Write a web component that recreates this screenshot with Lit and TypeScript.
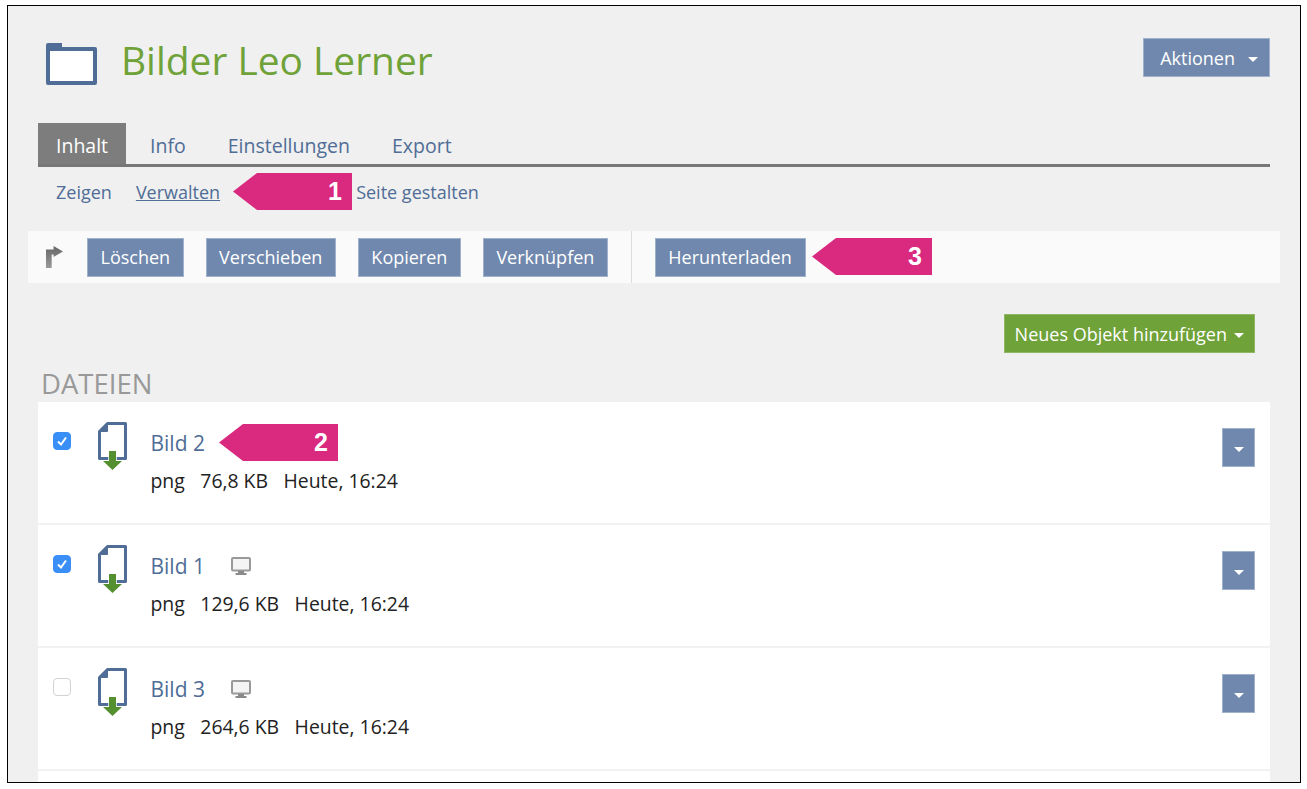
import { LitElement, css, html } from "lit";
import { customElement } from "lit/decorators.js";

const caret = html`<span class="caret"></span>`;

const files = [
  { name: "Bild 2", size: "76,8 KB", checked: true, screen: false },
  { name: "Bild 1", size: "129,6 KB", checked: true, screen: true },
  { name: "Bild 3", size: "264,6 KB", checked: false, screen: true },
];

const fileIcon = html`<svg class="file-icon" width="32" height="50" viewBox="0 0 32 50">
  <path d="M10.5 2.5H28.5V37.5H2.5V10.5Z" fill="#fff" stroke="#4f6d96" stroke-width="3" stroke-linejoin="round" />
  <path d="M2 10.5L10.500 2V10.500Z" fill="#4f6d96" stroke="#4f6d96" />
  <path d="M12 30H19V40H25L15.5 49L6 40H12Z" fill="#54902f" stroke="#fff" stroke-width="1.500" paint-order="stroke" />
</svg>`;

const screenIcon = html`<svg class="screen" width="20" height="19" viewBox="0 0 20 19">
  <rect x="1" y="1" width="18" height="12.500" rx="1" fill="#f4f4f4" stroke="#999" stroke-width="2" />
  <path d="M7 14H13V16H15.500V18H4.500V16H7Z" fill="#8a8a8a" />
</svg>`;

@customElement("app-root")
export class AppRoot extends LitElement {
  static styles = css`
    :host {
      display: block;
      width: 1307px;
      height: 789px;
      background: #fff;
      font-family: "Open Sans", sans-serif;
      font-size: 18px;
      color: #222;
    }
    .frame {
      position: relative;
      top: 5px;
      box-sizing: border-box;
      width: 1294px;
      height: 778px;
      margin-left: 7px;
      border: 1px solid #000;
      background: #f0f0f0;
      overflow: hidden;
    }
    .head {
      display: flex;
      align-items: flex-start;
      justify-content: space-between;
      box-sizing: border-box;
      height: 117px;
      padding: 32px 30px 0 38px;
    }
    .title-wrap {
      display: flex;
      align-items: center;
      gap: 24px;
      margin-top: 1px;
    }
    h1 {
      margin: 0 0 8px;
      font-size: 38.900px;
      font-weight: 400;
      line-height: 42px;
      color: #6fa239;
    }
    .btn {
      display: flex;
      align-items: center;
      box-sizing: border-box;
      height: 39px;
      padding: 0 12.500px;
      background: #7088ad;
      border: 1px solid #9fb1cb;
      color: #fff;
      white-space: nowrap;
    }
    .actions {
      gap: 13px;
      padding: 0 11px 0 16px;
    }
    .caret {
      display: inline-block;
      width: 0;
      height: 0;
      margin-top: 4px;
      border-left: 5.500px solid transparent;
      border-right: 5.500px solid transparent;
      border-top: 5.500px solid #fff;
    }
    .tabs {
      display: flex;
      height: 41px;
      margin: 0 30px;
      border-bottom: 3px solid #777;
      font-size: 19.500px;
    }
    .tabs span {
      display: flex;
      align-items: center;
      padding: 4px 18px 0;
      margin-right: 6px;
      color: #4f6d96;
    }
    .tabs span.on {
      background: #7d7d7d;
      color: #fff;
    }
    .subtabs {
      display: flex;
      align-items: center;
      height: 50px;
      padding-left: 48px;
      color: #4f6d96;
    }
    .subtabs span {
      margin-right: 24px;
    }
    .subtabs .current {
      text-decoration: underline;
      margin-right: 136px;
    }
    .toolbar {
      display: flex;
      align-items: center;
      height: 52px;
      margin: 14px 20px 0;
      background: #fafafa;
    }
    .turn {
      margin: 0 24px 0 18px;
    }
    .toolbar .btn + .btn {
      margin-left: 22px;
    }
    .toolbar .download {
      padding-right: 13.500px;
    }
    .sep {
      width: 1px;
      height: 52px;
      margin: 0 23px;
      background: #dcdcdc;
    }
    .add-row {
      display: flex;
      justify-content: flex-end;
      margin: 31px 45px 0 0;
    }
    .add {
      gap: 7px;
      padding: 0 10px;
      background: #6fa239;
      border-color: #8fb765;
    }
    h2 {
      margin: 13px 0 0 33px;
      font-size: 27.500px;
      line-height: 36px;
      font-weight: 400;
      color: #999;
    }
    .list {
      margin: 0 30px;
      background: #fff;
    }
    .row {
      display: flex;
      align-items: flex-start;
      box-sizing: border-box;
      height: 123px;
      border-bottom: 2px solid #f2f2f2;
      padding: 20px 15px 0;
    }
    .check {
      display: flex;
      align-items: center;
      justify-content: center;
      box-sizing: border-box;
      flex: none;
      width: 18px;
      height: 18px;
      margin-top: 10px;
      border-radius: 4px;
      background: #fff;
      border: 1.500px solid #d2d2d2;
    }
    .check.on {
      background: #3a8ff7;
      border-color: #3a8ff7;
    }
    .file-icon {
      flex: none;
      margin: -1px 0 0 26px;
    }
    .info {
      flex: 1;
      margin-left: 21.500px;
    }
    .name {
      display: flex;
      align-items: center;
      gap: 26px;
      height: 42px;
      font-size: 21px;
      color: #4f6d96;
    }
    .meta {
      display: flex;
      gap: 15.500px;
      margin-top: 3px;
      font-size: 19.400px;
    }
    .more {
      justify-content: center;
      width: 33px;
      padding: 0;
      margin-top: 6px;
    }
    .arrow {
      position: absolute;
      display: flex;
      align-items: center;
      justify-content: flex-end;
      box-sizing: border-box;
      width: 119px;
      height: 37px;
      padding-right: 10px;
      background: #d92a7f;
      clip-path: polygon(0 50%, 24px 0, 100% 0, 100% 100%, 24px 100%);
      font-family: "Liberation Sans", Arial, sans-serif;
      font-size: 25px;
      font-weight: 700;
      color: #fff;
    }
    .arrow.wide {
      width: 120px;
    }
  `;

  render() {
    return html`
      <div class="frame">
        <div class="head">
          <div class="title-wrap">
            <svg width="51" height="42" viewBox="0 0 51 42">
              <path d="M0 2a2 2 0 0 1 2-2H16V4H49a2 2 0 0 1 2 2V40a2 2 0 0 1-2 2H2a2 2 0 0 1-2-2Z" fill="#4f6d96" />
              <rect x="4" y="8" width="43" height="30" fill="#fff" />
            </svg>
            <h1>Bilder Leo Lerner</h1>
          </div>
          <div class="btn actions">Aktionen ${caret}</div>
        </div>

        <div class="tabs">
          <span class="on">Inhalt</span>
          <span>Info</span>
          <span>Einstellungen</span>
          <span>Export</span>
        </div>
        <div class="subtabs">
          <span>Zeigen</span>
          <span class="current">Verwalten</span>
          <span>Seite gestalten</span>
        </div>

        <div class="toolbar">
          <svg class="turn" width="17" height="22" viewBox="0 0 18 22" preserveAspectRatio="none">
            <defs>
              <linearGradient id="turn-fill" x1="0" y1="0" x2="0" y2="1">
                <stop offset="0" stop-color="#666" />
                <stop offset="1" stop-color="#999" />
              </linearGradient>
            </defs>
            <path d="M0 22V3.500H8V0L18 5.500L8 11V8.500H6V22Z" fill="url(#turn-fill)" />
          </svg>
          <div class="btn">Löschen</div>
          <div class="btn">Verschieben</div>
          <div class="btn">Kopieren</div>
          <div class="btn">Verknüpfen</div>
          <div class="sep"></div>
          <div class="btn download">Herunterladen</div>
        </div>

        <div class="add-row">
          <div class="btn add">Neues Objekt hinzufügen ${caret}</div>
        </div>
        <h2>DATEIEN</h2>

        <div class="list">
          ${files.map(
            (f) => html`
              <div class="row">
                <div class="check ${f.checked ? "on" : ""}">
                  ${f.checked
                    ? html`<svg width="12" height="12" viewBox="0 0 12 12">
                        <path d="M2 6.500L5 9.500L10 2.500" fill="none" stroke="#fff" stroke-width="2" />
                      </svg>`
                    : ""}
                </div>
                ${fileIcon}
                <div class="info">
                  <div class="name">${f.name} ${f.screen ? screenIcon : ""}</div>
                  <div class="meta">
                    <span>png</span><span>${f.size}</span><span>Heute, 16:24</span>
                  </div>
                </div>
                <div class="btn more">${caret}</div>
              </div>
            `
          )}
          <div class="row"></div>
        </div>

        <div class="arrow" style="left:225px;top:167px">1</div>
        <div class="arrow" style="left:211px;top:418px">2</div>
        <div class="arrow wide" style="left:804px;top:232px">3</div>
      </div>
    `;
  }
}
